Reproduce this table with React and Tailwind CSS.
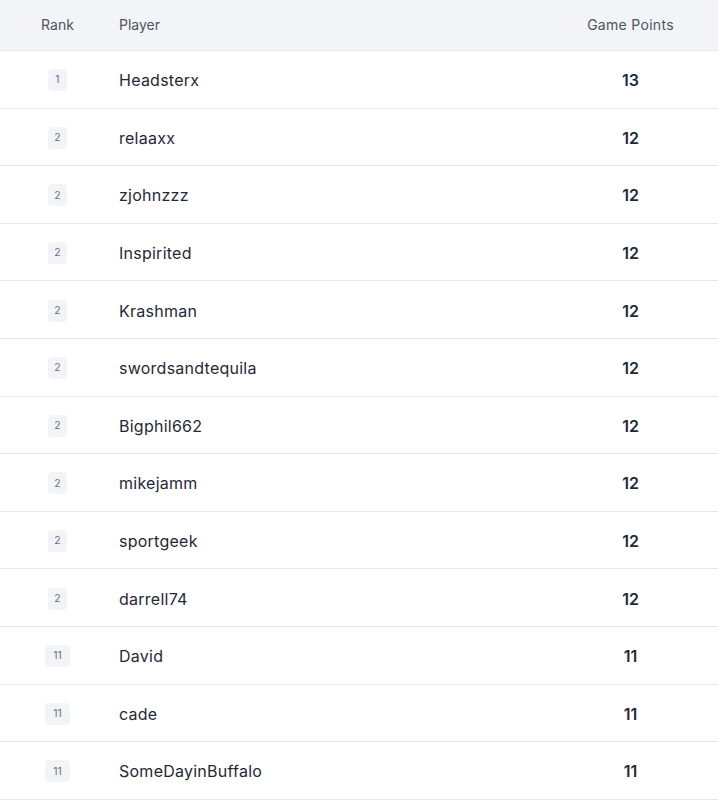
import React from "react";

const players = [
  { rank: 1, name: "Headsterx", points: 13 },
  { rank: 2, name: "relaaxx", points: 12 },
  { rank: 2, name: "zjohnzzz", points: 12 },
  { rank: 2, name: "Inspirited", points: 12 },
  { rank: 2, name: "Krashman", points: 12 },
  { rank: 2, name: "swordsandtequila", points: 12 },
  { rank: 2, name: "Bigphil662", points: 12 },
  { rank: 2, name: "mikejamm", points: 12 },
  { rank: 2, name: "sportgeek", points: 12 },
  { rank: 2, name: "darrell74", points: 12 },
  { rank: 11, name: "David", points: 11 },
  { rank: 11, name: "cade", points: 11 },
  { rank: 11, name: "SomeDayinBuffalo", points: 11 },
];

export default function App() {
  return (
    <main className="w-[718px] bg-white font-['Inter',sans-serif]">
      <div className="flex h-[51px] items-center border-b border-[#e5e7eb] bg-[#f2f4f7] pb-[2px] text-[14px] text-[#4b5563]">
        <div className="w-[115px] text-center">Rank</div>
        <div className="flex-1 pl-[4px]">Player</div>
        <div className="w-[175px] text-center tracking-[0.3px]">Game Points</div>
      </div>
      {players.map((p, i) => (
        <div
          key={i}
          className="flex h-[57.6px] items-center border-b border-[#e5e7eb] pt-[2px]"
        >
          <div className="flex w-[115px] justify-center">
            <span
              className={
                (p.rank > 9 ? "w-[25px]" : "w-[19px]") +
                " flex h-[22px] items-center justify-center rounded-[4px] bg-[#f3f4f7] text-[10.5px] text-[#6b7280]"
              }
            >
              {p.rank}
            </span>
          </div>
          <div className="flex-1 pl-[4px] text-[16px] tracking-[0.25px] text-[#1f2937]">
            {p.name}
          </div>
          <div className="w-[175px] text-center text-[16px] font-semibold text-[#1f2937]">
            {p.points}
          </div>
        </div>
      ))}
    </main>
  );
}
